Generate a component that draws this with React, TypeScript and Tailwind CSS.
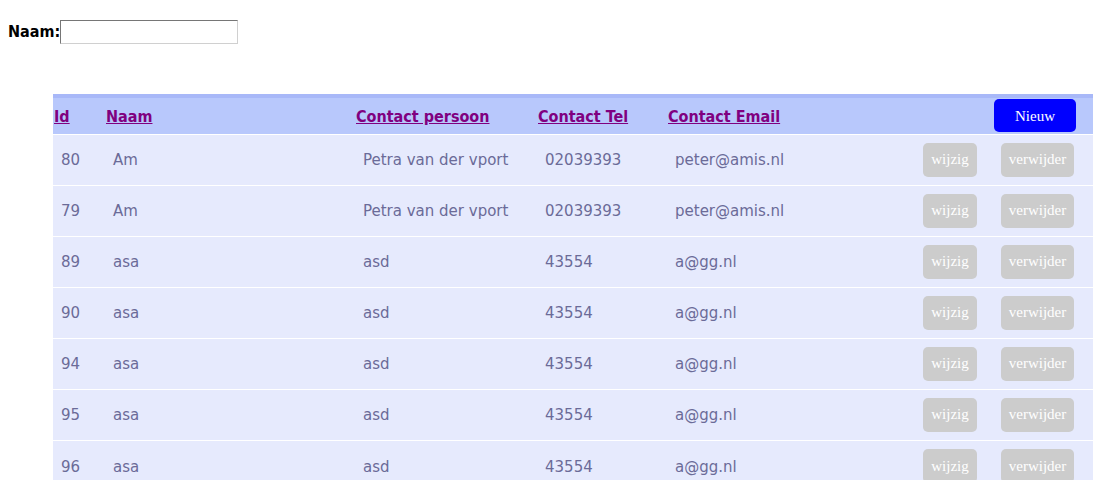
const rows = [
  { id: 80, naam: "Am", persoon: "Petra van der vport", tel: "02039393", email: "peter@amis.nl" },
  { id: 79, naam: "Am", persoon: "Petra van der vport", tel: "02039393", email: "peter@amis.nl" },
  { id: 89, naam: "asa", persoon: "asd", tel: "43554", email: "a@gg.nl" },
  { id: 90, naam: "asa", persoon: "asd", tel: "43554", email: "a@gg.nl" },
  { id: 94, naam: "asa", persoon: "asd", tel: "43554", email: "a@gg.nl" },
  { id: 95, naam: "asa", persoon: "asd", tel: "43554", email: "a@gg.nl" },
  { id: 96, naam: "asa", persoon: "asd", tel: "43554", email: "a@gg.nl" },
];

const headers = ["Id", "Naam", "Contact persoon", "Contact Tel", "Contact Email"];

export default function App() {
  return (
    <div className="min-h-[480px] bg-white font-['DejaVu_Sans',sans-serif]">
      <div className="flex items-center pl-2 pt-5">
        <label className="font-['DejaVu_Sans_Condensed','DejaVu_Sans',sans-serif] text-[16px] font-bold text-black">
          Naam:
        </label>
        <input
          type="text"
          className="h-6 w-[178px] border border-t-[#767676] border-l-[#767676] border-r-[#d0d0d0] border-b-[#d0d0d0] bg-white px-1 outline-none"
        />
      </div>

      <div className="mt-[50px] pl-[53px] pr-[18px]">
        <table className="w-full table-fixed border-collapse">
          <colgroup>
            <col className="w-[52px]" />
            <col className="w-[250px]" />
            <col className="w-[182px]" />
            <col className="w-[130px]" />
            <col />
            <col className="w-[78px]" />
            <col className="w-[92px]" />
          </colgroup>
          <thead>
            <tr className="h-[38px] border-t-4 border-[#a8b8f8] bg-[#b8c8fc] text-left">
              {headers.map((h) => (
                <th
                  key={h}
                  className="px-[1px] pt-[2px] font-['DejaVu_Sans_Condensed','DejaVu_Sans',sans-serif] text-[16px] font-bold"
                >
                  <a href="#" className="text-[#800080] underline">
                    {h}
                  </a>
                </th>
              ))}
              <th colSpan={2} className="pr-[17px] text-right font-normal">
                <button className="h-[33px] w-[82px] rounded-[5px] bg-[#0000ff] font-['Liberation_Serif',serif] text-[15px] font-normal text-white">
                  Nieuw
                </button>
              </th>
            </tr>
          </thead>
          <tbody>
            {rows.map((r) => (
              <tr key={r.id} className="h-[51px] border-t border-white bg-[#e6eafd] text-[15px] text-[#6b6b98]">
                <td className="pl-[8px] pt-[2px]">{r.id}</td>
                <td className="pl-[8px] pt-[2px]">{r.naam}</td>
                <td className="pl-[8px] pt-[2px]">{r.persoon}</td>
                <td className="pl-[8px] pt-[2px]">{r.tel}</td>
                <td className="pl-[8px] pt-[2px]">{r.email}</td>
                <td>
                  <button className="h-[34px] w-[54px] rounded-[5px] bg-[#cccccc] font-['Liberation_Serif',serif] text-[15px] text-white">
                    wijzig
                  </button>
                </td>
                <td>
                  <button className="h-[34px] w-[73px] rounded-[5px] bg-[#cccccc] font-['Liberation_Serif',serif] text-[15px] text-white">
                    verwijder
                  </button>
                </td>
              </tr>
            ))}
          </tbody>
        </table>
      </div>
    </div>
  );
}
